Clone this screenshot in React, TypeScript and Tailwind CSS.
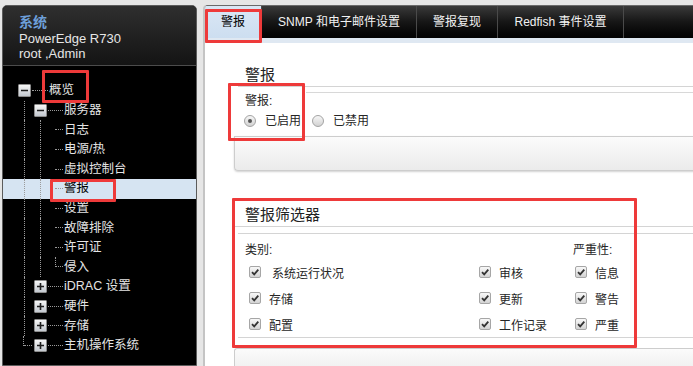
import type { ReactNode } from 'react';

type Cell = 'v' | 'h' | 'hr' | 'corner' | 'minus' | 'plus';

interface TreeRow {
  label: string;
  cells: Cell[];
  selected?: boolean;
}

const rows: TreeRow[] = [
  { label: '概览', cells: ['minus', 'h'] },
  { label: '服务器', cells: ['v', 'minus', 'h'] },
  { label: '日志', cells: ['v', 'v', 'hr'] },
  { label: '电源/热', cells: ['v', 'v', 'hr'] },
  { label: '虚拟控制台', cells: ['v', 'v', 'hr'] },
  { label: '警报', cells: ['v', 'v', 'hr'], selected: true },
  { label: '设置', cells: ['v', 'v', 'hr'] },
  { label: '故障排除', cells: ['v', 'v', 'hr'] },
  { label: '许可证', cells: ['v', 'v', 'hr'] },
  { label: '侵入', cells: ['v', 'v', 'corner'] },
  { label: 'iDRAC 设置', cells: ['v', 'plus', 'h'] },
  { label: '硬件', cells: ['v', 'plus', 'h'] },
  { label: '存储', cells: ['v', 'plus', 'h'] },
  { label: '主机操作系统', cells: ['corner', 'plus', 'h'] },
];

const tabs = [
  { label: '警报', w: 'w-[57px]', active: true },
  { label: 'SNMP 和电子邮件设置', w: 'w-[155px]' },
  { label: '警报复现', w: 'w-[81px]' },
  { label: 'Redfish 事件设置', w: 'w-[126px]' },
];

const Box = ({ plus }: { plus?: boolean }) => (
  <div className="w-[13px] h-[13px] border border-[#8c8c8c] rounded-[1px] bg-gradient-to-b from-[#f6f6f6] to-[#c3c8cf] flex items-center justify-center">
    <svg width="9" height="9" viewBox="0 0 9 9">
      <path d={plus ? 'M1 4.5h7M4.5 1v7' : 'M1 4.5h7'} stroke="#1e1e1e" strokeWidth="1.6" />
    </svg>
  </div>
);

const Guide = ({ kind, wide }: { kind: Cell; wide: boolean }) => {
  const w = wide ? 'w-4' : 'w-[15px]';
  if (kind === 'minus' || kind === 'plus')
    return (
      <div className={`${w} h-full flex items-center justify-center`}>
        <Box plus={kind === 'plus'} />
      </div>
    );
  if (kind === 'v')
    return (
      <div className={`${w} h-full flex justify-center`}>
        <div className="h-full border-l border-dotted border-[#9a9a9a]" />
      </div>
    );
  if (kind === 'h')
    return (
      <div className={`${w} h-full flex items-center`}>
        <div className="w-full border-t border-dotted border-[#9a9a9a]" />
      </div>
    );
  if (kind === 'hr')
    return (
      <div className={`${w} h-full flex items-center justify-end`}>
        <div className="w-[8px] border-t border-dotted border-[#9a9a9a]" />
      </div>
    );
  return (
    <div className={`${w} h-full flex flex-col`}>
      <div className="h-1/2 flex">
        <div className="w-1/2 border-r border-dotted border-[#9a9a9a]" />
        <div className="w-1/2 border-b border-dotted border-[#9a9a9a]" />
      </div>
    </div>
  );
};

const Frame = ({ className }: { className: string }) => (
  <div className={`absolute border-[3px] border-[#ee3a3a] rounded-[1px] pointer-events-none ${className}`} />
);

const Radio = ({ checked, children }: { checked?: boolean; children: ReactNode }) => (
  <label className="flex items-center gap-[9px]">
    <span className="w-[12px] h-[12px] rounded-full border border-[#a3a3a3] bg-gradient-to-b from-[#f7f7f7] to-[#d2d2d2] flex items-center justify-center">
      {checked && <span className="w-[4px] h-[4px] rounded-full bg-[#555]" />}
    </span>
    <span>{children}</span>
  </label>
);

const Check = ({ children, gap = 'gap-[8px]' }: { children: ReactNode; gap?: string }) => (
  <div className={`flex items-center h-[26px] ${gap}`}>
    <span className="w-[12px] h-[12px] shrink-0 rounded-[2px] border border-[#a6a6a6] bg-gradient-to-b from-[#f8f8f8] to-[#d3d3d3] flex items-center justify-center">
      <svg width="10" height="10" viewBox="0 0 10 10">
        <path d="M2 5.2 4.2 7.4 8.3 2.6" fill="none" stroke="#333" strokeWidth="1.8" />
      </svg>
    </span>
    <span className="pt-[3px]">{children}</span>
  </div>
);

export default function App() {
  return (
    <div className="w-[693px] h-[366px] overflow-hidden bg-[#e6e6e6] flex font-['Liberation_Sans','Noto_Sans_CJK_SC',sans-serif]">
      {/* left navigation */}
      <div className="relative w-[195px] shrink-0 ml-[2px] mt-[5px] rounded-t-[5px] border border-[#5c5c5c] bg-black flex flex-col overflow-hidden">
        <div className="h-[60px] shrink-0 px-[16px] pt-[7px] bg-gradient-to-b from-[#2f2f2f] to-[#141414] border-b border-[#4c4c4c]">
          <div className="text-[14px] leading-[18px] font-bold text-[#6d9fd9]">系统</div>
          <div className="text-[13px] leading-[15px] text-[#e6e6e6]">PowerEdge R730</div>
          <div className="text-[13px] leading-[15px] text-[#e6e6e6]">root ,Admin</div>
        </div>
        <div className="pt-[15px]">
          {rows.map((r) => (
            <div
              key={r.label}
              className={`flex h-[19.6px] items-center pl-[13px] text-[12.5px] whitespace-nowrap ${
                r.selected ? 'bg-[#d6e4f2] text-black' : 'text-[#e4e4e4]'
              }`}
            >
              {r.cells.map((c, i) => (
                <Guide key={i} kind={c} wide={i < 2} />
              ))}
              <span className="ml-[1px]">{r.label}</span>
            </div>
          ))}
        </div>
        <Frame className="left-[39px] top-[64px] w-[47px] h-[33px]" />
        <Frame className="left-[47px] top-[173px] w-[66px] h-[23px]" />
      </div>

      {/* right content */}
      <div className="relative flex-1 ml-[6px] mt-[5px] flex flex-col bg-white border-l-2 border-[#c4c4c4] rounded-tl-[4px] overflow-hidden text-[#262626]">
        <div className="h-[33px] shrink-0 flex border-t border-[#6a6a6a] bg-gradient-to-b from-[#3a3a3a] via-[#161616] to-[#030303] text-[12px]">
          {tabs.map((t) => (
            <div
              key={t.label}
              className={`${t.w} shrink-0 flex items-center justify-center border-r border-[#4a4a4a] ${
                t.active ? 'bg-gradient-to-b from-[#dae7f5] to-[#cddef0] text-black' : 'text-[#f2f2f2]'
              }`}
            >
              {t.label}
            </div>
          ))}
        </div>
        <div className="h-[5px] shrink-0 bg-[#dfe8f2]" />

        <div className="pl-[29px]">
          {/* 警报 */}
          <div className="w-[470px]">
            <div className="mt-[22px] h-[22px] ml-[4px] pl-[7px] border-b border-[#d4d4d4] text-[15px] leading-[20px] text-[#222]">
              警报
            </div>
            <div className="ml-[72px] mt-[5px] border-t border-[#d8d8d8]" />
            <div className="pl-[11px] text-[12px] leading-[16px]">警报:</div>
            <div className="mt-[4px] pl-[10px] flex gap-[11px] text-[12px] leading-[16px]">
              <Radio checked>已启用</Radio>
              <Radio>已禁用</Radio>
            </div>
            <div className="mt-[7px] h-[35px] border border-r-0 border-[#cdcdcd] rounded-bl-[4px] bg-gradient-to-b from-[#fbfbfb] to-[#ebebeb] shadow-[0_1px_2px_rgba(0,0,0,0.18)]" />
          </div>

          {/* 警报筛选器 */}
          <div className="w-[470px] mt-[34px]">
            <div className="h-[22px] pl-[11px] border-b border-[#d4d4d4] text-[15px] leading-[20px] text-[#222]">
              警报筛选器
            </div>
            <div className="ml-[4px] mt-[6px] border-t border-b border-[#d4d4d4] pt-[8px] text-[12px] leading-[16px]">
              <div className="grid grid-cols-[241px_96px_1fr]">
                <div className="pl-[7px]">类别:</div>
                <div />
                <div className="-ml-[2px]">严重性:</div>
              </div>
              <div className="mt-[1px] grid grid-cols-[241px_96px_1fr]">
                <div className="pl-[11px]">
                  <Check gap="gap-[11px]">系统运行状况</Check>
                  <Check>存储</Check>
                  <Check>配置</Check>
                </div>
                <div>
                  <Check>审核</Check>
                  <Check>更新</Check>
                  <Check>工作记录</Check>
                </div>
                <div>
                  <Check>信息</Check>
                  <Check>警告</Check>
                  <Check>严重</Check>
                </div>
              </div>
            </div>
            <div className="mt-[10px] h-[30px] border border-r-0 border-b-0 border-[#cdcdcd] rounded-tl-[3px] bg-gradient-to-b from-[#fbfbfb] to-[#ebebeb]" />
          </div>
        </div>

        <Frame className="left-0 top-[4px] w-[57px] h-[34px]" />
        <Frame className="left-[23px] top-[78px] w-[77px] h-[58px]" />
        <Frame className="left-[27px] top-[193px] w-[405px] h-[150px]" />
      </div>
    </div>
  );
}
